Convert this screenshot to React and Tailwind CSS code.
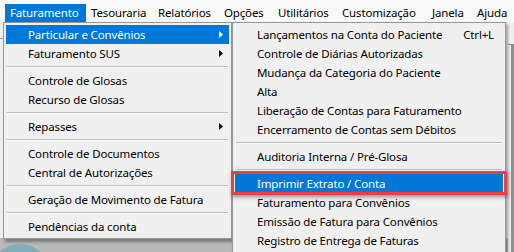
import React from 'react';

const menuBar = [
  { label: 'Faturamento', w: 'w-[81px]', active: true },
  { label: 'Tesouraria', w: 'w-[67px]' },
  { label: 'Relatórios', w: 'w-[66px]' },
  { label: 'Opções', w: 'w-[54px]' },
  { label: 'Utilitários', w: 'w-[64px]' },
  { label: 'Customização', w: 'w-[90px]' },
  { label: 'Janela', w: 'w-[45px]' },
  { label: 'Ajuda', w: 'w-[40px]' },
];

// '-' marks a separator
const mainMenu = [
  { label: 'Particular e Convênios', sub: true, active: true },
  { label: 'Faturamento SUS', sub: true },
  '-',
  { label: 'Controle de Glosas' },
  { label: 'Recurso de Glosas' },
  '-',
  { label: 'Repasses', sub: true },
  '-',
  { label: 'Controle de Documentos' },
  { label: 'Central de Autorizações' },
  '-',
  { label: 'Geração de Movimento de Fatura' },
  '-',
  { label: 'Pendências da conta' },
];

const subMenu = [
  { label: 'Lançamentos na Conta do Paciente', shortcut: 'Ctrl+L' },
  { label: 'Controle de Diárias Autorizadas' },
  { label: 'Mudança da Categoria do Paciente' },
  { label: 'Alta' },
  { label: 'Liberação de Contas para Faturamento' },
  { label: 'Encerramento de Contas sem Débitos' },
  '-',
  { label: 'Auditoria Interna / Pré-Glosa' },
  '-',
  { label: 'Imprimir Extrato / Conta', active: true },
  { label: 'Faturamento para Convênios' },
  { label: 'Emissão de Fatura para Convênios' },
  { label: 'Registro de Entrega de Faturas' },
];

const Arrow = ({ white }) => (
  <svg width="4" height="7" viewBox="0 0 4 7" className="ml-auto mr-[4px]">
    <path d="M0 0L4 3.5L0 7z" fill={white ? '#ffffff' : '#000000'} />
  </svg>
);

const Separator = () => (
  <div className="h-[8px] flex flex-col justify-center mx-[3px]">
    <div className="h-px bg-[#bdbdbd]" />
    <div className="h-px bg-[#fbfbfb]" />
  </div>
);

const MenuItem = ({ item }) => (
  <div className="px-[2px]">
    <div
      className={`h-[19px] flex items-center pl-[22px] pr-[2px] whitespace-nowrap ${
        item.active ? 'bg-[#0078d7] text-white' : 'text-black'
      }`}
    >
      <span>{item.label}</span>
      {item.shortcut && <span className="ml-auto mr-[7px]">{item.shortcut}</span>}
      {item.sub && <Arrow white={item.active} />}
    </div>
  </div>
);

const Menu = ({ items, className }) => (
  <div className={`absolute top-[22px] bg-[#f0f0f0] border border-[#979797] py-[2px] ${className}`}>
    {items.map((item, i) => (item === '-' ? <Separator key={i} /> : <MenuItem key={i} item={item} />))}
  </div>
);

const App = () => {
  return (
    <div
      className="relative w-[514px] h-[252px] overflow-hidden flex flex-col text-[11.5px] tracking-[-0.15px] leading-none"
      style={{ fontFamily: '"Noto Sans", "Open Sans", sans-serif' }}
    >
      {/* Menu bar */}
      <div className="h-[22px] shrink-0 bg-[#f9f9f9] flex items-end pl-[5px]">
        {menuBar.map((m) => (
          <div
            key={m.label}
            className={`${m.w} h-[18px] flex items-center pl-[5px] whitespace-nowrap ${
              m.active ? 'bg-[#0078d7] text-white' : 'text-black'
            }`}
          >
            {m.label}
          </div>
        ))}
      </div>

      {/* Window behind the menus */}
      <div className="flex-1 flex">
        <div className="flex-1 flex flex-col">
          <div className="flex-1 bg-[#f0f0f0] pt-[16px]">
            <div className="w-[4px] h-px bg-[#9a9a9a]" />
          </div>
          <div className="h-[14px] bg-[#b9b9b9] overflow-hidden">
            <div className="w-[60px] h-[60px] -ml-[10px] mt-[6px] rounded-full bg-[#7fb0ba]" />
          </div>
        </div>
        <div className="w-[6px] flex flex-col bg-[#f0f0f0]">
          <div className="h-[23px] border-b border-[#8c8c8c]" />
          <div className="flex-1 ml-[3px] w-[3px] bg-[#8f8f8f]" />
        </div>
      </div>

      {/* Faturamento dropdown */}
      <Menu items={mainMenu} className="left-[3px] w-[229px] shadow-[2px_3px_3px_rgba(0,0,0,0.35)]" />

      {/* Particular e Convênios submenu */}
      <Menu items={subMenu} className="left-[232px] w-[274px] h-[240px] shadow-[2px_2px_3px_rgba(0,0,0,0.35)]" />

      {/* Red highlight frame */}
      <div className="absolute left-[231px] top-[171px] w-[276px] h-[24px] border-[3px] border-[#ec4040] shadow-[1px_2px_4px_rgba(0,0,0,0.4)]" />
    </div>
  );
};

export default App;
